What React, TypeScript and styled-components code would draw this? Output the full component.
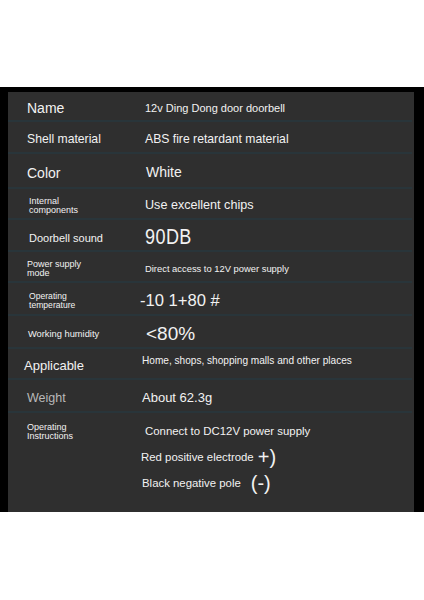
import styled, { createGlobalStyle } from "styled-components";

type Spec = {
  label: string[];
  labelSize: number;
  labelX: number;
  labelTone?: "muted";
  value: string;
  valueSize: number;
  valueX: number;
  height: number;
  big?: boolean;
  top?: boolean;
};

const specs: Spec[] = [
  { label: ["Name"], labelSize: 14, labelX: 27, value: "12v Ding Dong door doorbell", valueSize: 11, valueX: 145, height: 30 },
  { label: ["Shell material"], labelSize: 12.2, labelX: 27, value: "ABS fire retardant material", valueSize: 12.2, valueX: 145, height: 32 },
  { label: ["Color"], labelSize: 14, labelX: 27, value: "White", valueSize: 14, valueX: 146, height: 35 },
  { label: ["Internal", "components"], labelSize: 9, labelX: 29, value: "Use excellent chips", valueSize: 12.6, valueX: 145, height: 31 },
  { label: ["Doorbell sound"], labelSize: 11, labelX: 29, value: "90DB", valueSize: 22, valueX: 145, height: 32, big: true },
  { label: ["Power supply", "mode"], labelSize: 9, labelX: 27, value: "Direct access to 12V power supply", valueSize: 9.4, valueX: 145, height: 31 },
  { label: ["Operating", "temperature"], labelSize: 8.6, labelX: 29, value: "-10 1+80 #", valueSize: 16.6, valueX: 140, height: 33 },
  { label: ["Working humidity"], labelSize: 9.3, labelX: 28, value: "<80%", valueSize: 19, valueX: 146, height: 33 },
  { label: ["Applicable"], labelSize: 13, labelX: 24, value: "Home, shops, shopping malls and other places", valueSize: 10.1, valueX: 142, height: 31, top: true },
  { label: ["Weight"], labelSize: 12.5, labelX: 27, labelTone: "muted", value: "About 62.3g", valueSize: 13, valueX: 142, height: 33 },
];

const Global = createGlobalStyle`
  html, body {
    margin: 0;
    padding: 0;
    background: #ffffff;
    font-family: "Liberation Sans", Arial, sans-serif;
  }
`;

const Page = styled.div`
  width: 424px;
  height: 600px;
  padding-top: 87px;
  box-sizing: border-box;
`;

const Frame = styled.div`
  background: #000000;
  padding: 5px 10px 0 8px;
  height: 425px;
  box-sizing: border-box;
`;

const Panel = styled.div`
  background: #2f2f2f;
  height: 420px;
  display: flex;
  flex-direction: column;
  color: #f2f2f2;
`;

const Row = styled.div<{ $h: number; $valueX: number }>`
  height: ${({ $h }) => $h}px;
  box-sizing: border-box;
  padding-top: 5px;
  display: grid;
  grid-template-columns: ${({ $valueX }) => $valueX - 8}px 1fr;
  align-items: center;
  border-bottom: 2px solid #29353a;
  margin-right: 2px;
`;

const Label = styled.div<{ $size: number; $x: number; $tone?: "muted" }>`
  padding-left: ${({ $x }) => $x - 8}px;
  font-size: ${({ $size }) => $size}px;
  line-height: ${({ $size }) => Math.round($size * 1.05)}px;
  color: ${({ $tone }) => ($tone === "muted" ? "#b9b9b9" : "#f2f2f2")};
  white-space: nowrap;
`;

const Value = styled.div<{ $size: number; $top?: boolean }>`
  font-size: ${({ $size }) => $size}px;
  line-height: 1.1;
  white-space: nowrap;
  align-self: ${({ $top }) => ($top ? "start" : "center")};
  padding-top: ${({ $top }) => ($top ? 1 : 0)}px;
`;

const BigValue = styled.span`
  display: inline-block;
  font-size: 22px;
  line-height: 1;
  transform: scaleX(0.82);
  transform-origin: left center;
  letter-spacing: 0.5px;
`;

const Instructions = styled.div`
  flex: 1;
  display: grid;
  grid-template-columns: 132px 1fr;
  align-items: start;
`;

const InstrLabel = styled.div`
  padding: 10px 0 0 19px;
  font-size: 9px;
  line-height: 9px;
`;

const InstrList = styled.div`
  display: flex;
  flex-direction: column;
  padding-top: 5px;
`;

const InstrLine = styled.div<{ $x: number }>`
  height: 26px;
  display: flex;
  align-items: center;
  padding-left: ${({ $x }) => $x}px;
  font-size: 11.4px;
  white-space: nowrap;
`;

const Symbol = styled.span<{ $gap: number }>`
  font-size: 20px;
  font-weight: 300;
  margin-left: ${({ $gap }) => $gap}px;
  line-height: 1;
`;

export default function App() {
  return (
    <>
      <Global />
      <Page>
        <Frame>
          <Panel>
            {specs.map((s) => (
              <Row key={s.value} $h={s.height} $valueX={s.valueX}>
                <Label $size={s.labelSize} $x={s.labelX} $tone={s.labelTone}>
                  {s.label.map((line) => (
                    <div key={line}>{line}</div>
                  ))}
                </Label>
                <Value $size={s.valueSize} $top={s.top}>
                  {s.big ? <BigValue>{s.value}</BigValue> : s.value}
                </Value>
              </Row>
            ))}
            <Instructions>
              <InstrLabel>
                <div>Operating</div>
                <div>Instructions</div>
              </InstrLabel>
              <InstrList>
                <InstrLine $x={5}>Connect to DC12V power supply</InstrLine>
                <InstrLine $x={1}>
                  Red positive electrode<Symbol $gap={4}>+)</Symbol>
                </InstrLine>
                <InstrLine $x={2}>
                  Black negative pole<Symbol $gap={10}>(-)</Symbol>
                </InstrLine>
              </InstrList>
            </Instructions>
          </Panel>
        </Frame>
      </Page>
    </>
  );
}
